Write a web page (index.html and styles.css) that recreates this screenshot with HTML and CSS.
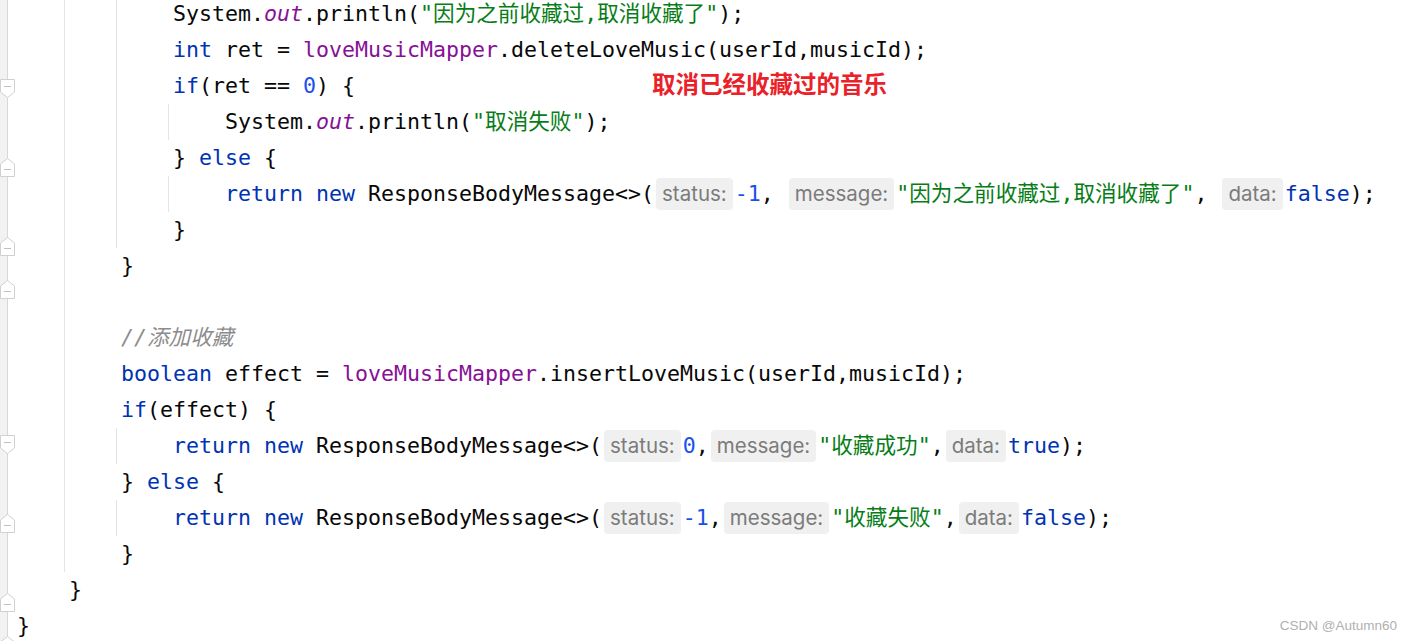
FILE: index.html
```html
<!DOCTYPE html>
<html lang="zh">
<head>
<meta charset="utf-8">
<title>Editor</title>
<link rel="stylesheet" href="styles.css">
</head>
<body>
<div class="editor">
  <div class="gutter">
    <div class="row"></div>
    <div class="row"></div>
    <div class="row"><svg class="fold down" width="15" height="19" viewBox="0 0 15 19"><path d="M0.5 0.5H14.5V13L7.5 18.5L0.5 13Z" fill="#fff" stroke="#d0d0d0"/><path d="M4 7.5H11" stroke="#c0c0c0"/></svg></div>
    <div class="row"></div>
    <div class="row"><svg class="fold up" width="15" height="19" viewBox="0 0 15 19"><path d="M0.5 6L7.5 0.5L14.5 6V18.5H0.5Z" fill="#fff" stroke="#d0d0d0"/><path d="M4 11.5H11" stroke="#c0c0c0"/></svg></div>
    <div class="row"></div>
    <div class="row"><svg class="fold up" width="15" height="19" viewBox="0 0 15 19"><path d="M0.5 6L7.5 0.5L14.5 6V18.5H0.5Z" fill="#fff" stroke="#d0d0d0"/><path d="M4 11.5H11" stroke="#c0c0c0"/></svg></div>
    <div class="row"><svg class="fold up" width="15" height="19" viewBox="0 0 15 19"><path d="M0.5 6L7.5 0.5L14.5 6V18.5H0.5Z" fill="#fff" stroke="#d0d0d0"/><path d="M4 11.5H11" stroke="#c0c0c0"/></svg></div>
    <div class="row"></div>
    <div class="row"></div>
    <div class="row"></div>
    <div class="row"><svg class="fold down" width="15" height="19" viewBox="0 0 15 19"><path d="M0.5 0.5H14.5V13L7.5 18.5L0.5 13Z" fill="#fff" stroke="#d0d0d0"/><path d="M4 7.5H11" stroke="#c0c0c0"/></svg></div>
    <div class="row"></div>
    <div class="row"><svg class="fold up" width="15" height="19" viewBox="0 0 15 19"><path d="M0.5 6L7.5 0.5L14.5 6V18.5H0.5Z" fill="#fff" stroke="#d0d0d0"/><path d="M4 11.5H11" stroke="#c0c0c0"/></svg></div>
    <div class="row"></div>
    <div class="row"><svg class="fold up" width="15" height="19" viewBox="0 0 15 19"><path d="M0.5 6L7.5 0.5L14.5 6V18.5H0.5Z" fill="#fff" stroke="#d0d0d0"/><path d="M4 11.5H11" stroke="#c0c0c0"/></svg></div>
    <div class="row"><svg class="fold up" width="15" height="19" viewBox="0 0 15 19"><path d="M0.5 6L7.5 0.5L14.5 6V18.5H0.5Z" fill="#fff" stroke="#d0d0d0"/><path d="M4 11.5H11" stroke="#c0c0c0"/></svg></div>
    <div class="row row-last"></div>
  </div>
  <div class="code">
    <div class="blk blk-hidden">
      <div class="blk">
        <div class="blk">
          <div class="ln">System.<span class="st">out</span>.println(<span class="s">"因为之前收藏过,取消收藏了"</span>);</div>
          <div class="ln"><span class="k">int</span> ret = <span class="f">loveMusicMapper</span>.deleteLoveMusic(userId,musicId);</div>
          <div class="ln"><span class="k">if</span>(ret == <span class="n">0</span>) {</div>
          <div class="blk">
            <div class="ln">System.<span class="st">out</span>.println(<span class="s">"取消失败"</span>);</div>
          </div>
          <div class="ln">} <span class="k">else</span> {</div>
          <div class="blk">
            <div class="ln"><span class="k">return new</span> ResponseBodyMessage&lt;&gt;(<span class="hint">status:</span><span class="n">-1</span>, <span class="hint">message:</span><span class="s">"因为之前收藏过,取消收藏了"</span>, <span class="hint">data:</span><span class="k">false</span>);</div>
          </div>
          <div class="ln">}</div>
        </div>
        <div class="ln">}</div>
        <div class="ln"></div>
        <div class="ln"><span class="c">//添加收藏</span></div>
        <div class="ln"><span class="k">boolean</span> effect = <span class="f">loveMusicMapper</span>.insertLoveMusic(userId,musicId);</div>
        <div class="ln"><span class="k">if</span>(effect) {</div>
        <div class="blk">
          <div class="ln"><span class="k">return new</span> ResponseBodyMessage&lt;&gt;(<span class="hint">status:</span><span class="n">0</span>,<span class="hint">message:</span><span class="s">"收藏成功"</span>,<span class="hint">data:</span><span class="k">true</span>);</div>
        </div>
        <div class="ln">} <span class="k">else</span> {</div>
        <div class="blk">
          <div class="ln"><span class="k">return new</span> ResponseBodyMessage&lt;&gt;(<span class="hint">status:</span><span class="n">-1</span>,<span class="hint">message:</span><span class="s">"收藏失败"</span>,<span class="hint">data:</span><span class="k">false</span>);</div>
        </div>
        <div class="ln">}</div>
      </div>
      <div class="ln">}</div>
    </div>
    <div class="ln ln-last">}</div>
  </div>
  <div class="note">取消已经收藏过的音乐</div>
</div>
<div class="watermark">CSDN @Autumn60</div>
</body>
</html>
```
FILE: styles.css
```css
html, body {
  margin: 0;
  padding: 0;
  background: #ffffff;
  overflow: hidden;
}

body {
  width: 1411px;
  height: 641px;
  position: relative;
}

.editor {
  position: relative;
  display: flex;
  margin-top: -4px;
}

.gutter {
  width: 17px;
  flex: none;
  background: linear-gradient(to right, #f2f2f2 0, #f2f2f2 7px, #d8d8d8 7px, #d8d8d8 8px, #ffffff 8px);
}

.row {
  height: 36px;
}

.row-last {
  height: 33px;
}

.fold {
  display: block;
}

.fold.down {
  margin-top: 11px;
}

.fold.up {
  margin-top: 7px;
}

.code {
  flex: 1;
  font-family: "DejaVu Sans Mono", "Noto Sans CJK SC", monospace;
  font-size: 21.6px;
  color: #080808;
}

.ln {
  height: 36px;
  line-height: 36px;
  white-space: pre;
}

.ln-last {
  height: 33px;
}

.blk {
  margin-left: -5px;
  border-left: 1px solid #e4e4e4;
  padding-left: 56px;
}

.blk-hidden {
  border-left-color: transparent;
}

.k { color: #0033b3; }
.n { color: #1750eb; }
.s { color: #067d17; }
.f { color: #871094; }
.st { color: #871094; font-style: italic; }
.c { color: #8c8c8c; font-style: italic; }

.hint {
  display: inline-block;
  vertical-align: top;
  height: 32px;
  line-height: 32px;
  margin: 2px 2px 0 2px;
  padding: 0 6px;
  border-radius: 4px;
  background: #f0f0f0;
  color: #7b7b7b;
  font-family: "Inter", "Noto Sans", sans-serif;
  font-size: 20.5px;
}

.note {
  position: absolute;
  left: 652px;
  top: 73px;
  font-family: "Noto Sans CJK SC", sans-serif;
  font-weight: 700;
  font-size: 23.5px;
  line-height: 28px;
  color: #ea2128;
}

.watermark {
  position: absolute;
  right: 14px;
  bottom: 8px;
  font-family: "Liberation Sans", Arial, sans-serif;
  font-size: 13.5px;
  color: #b0b0b0;
}
```
